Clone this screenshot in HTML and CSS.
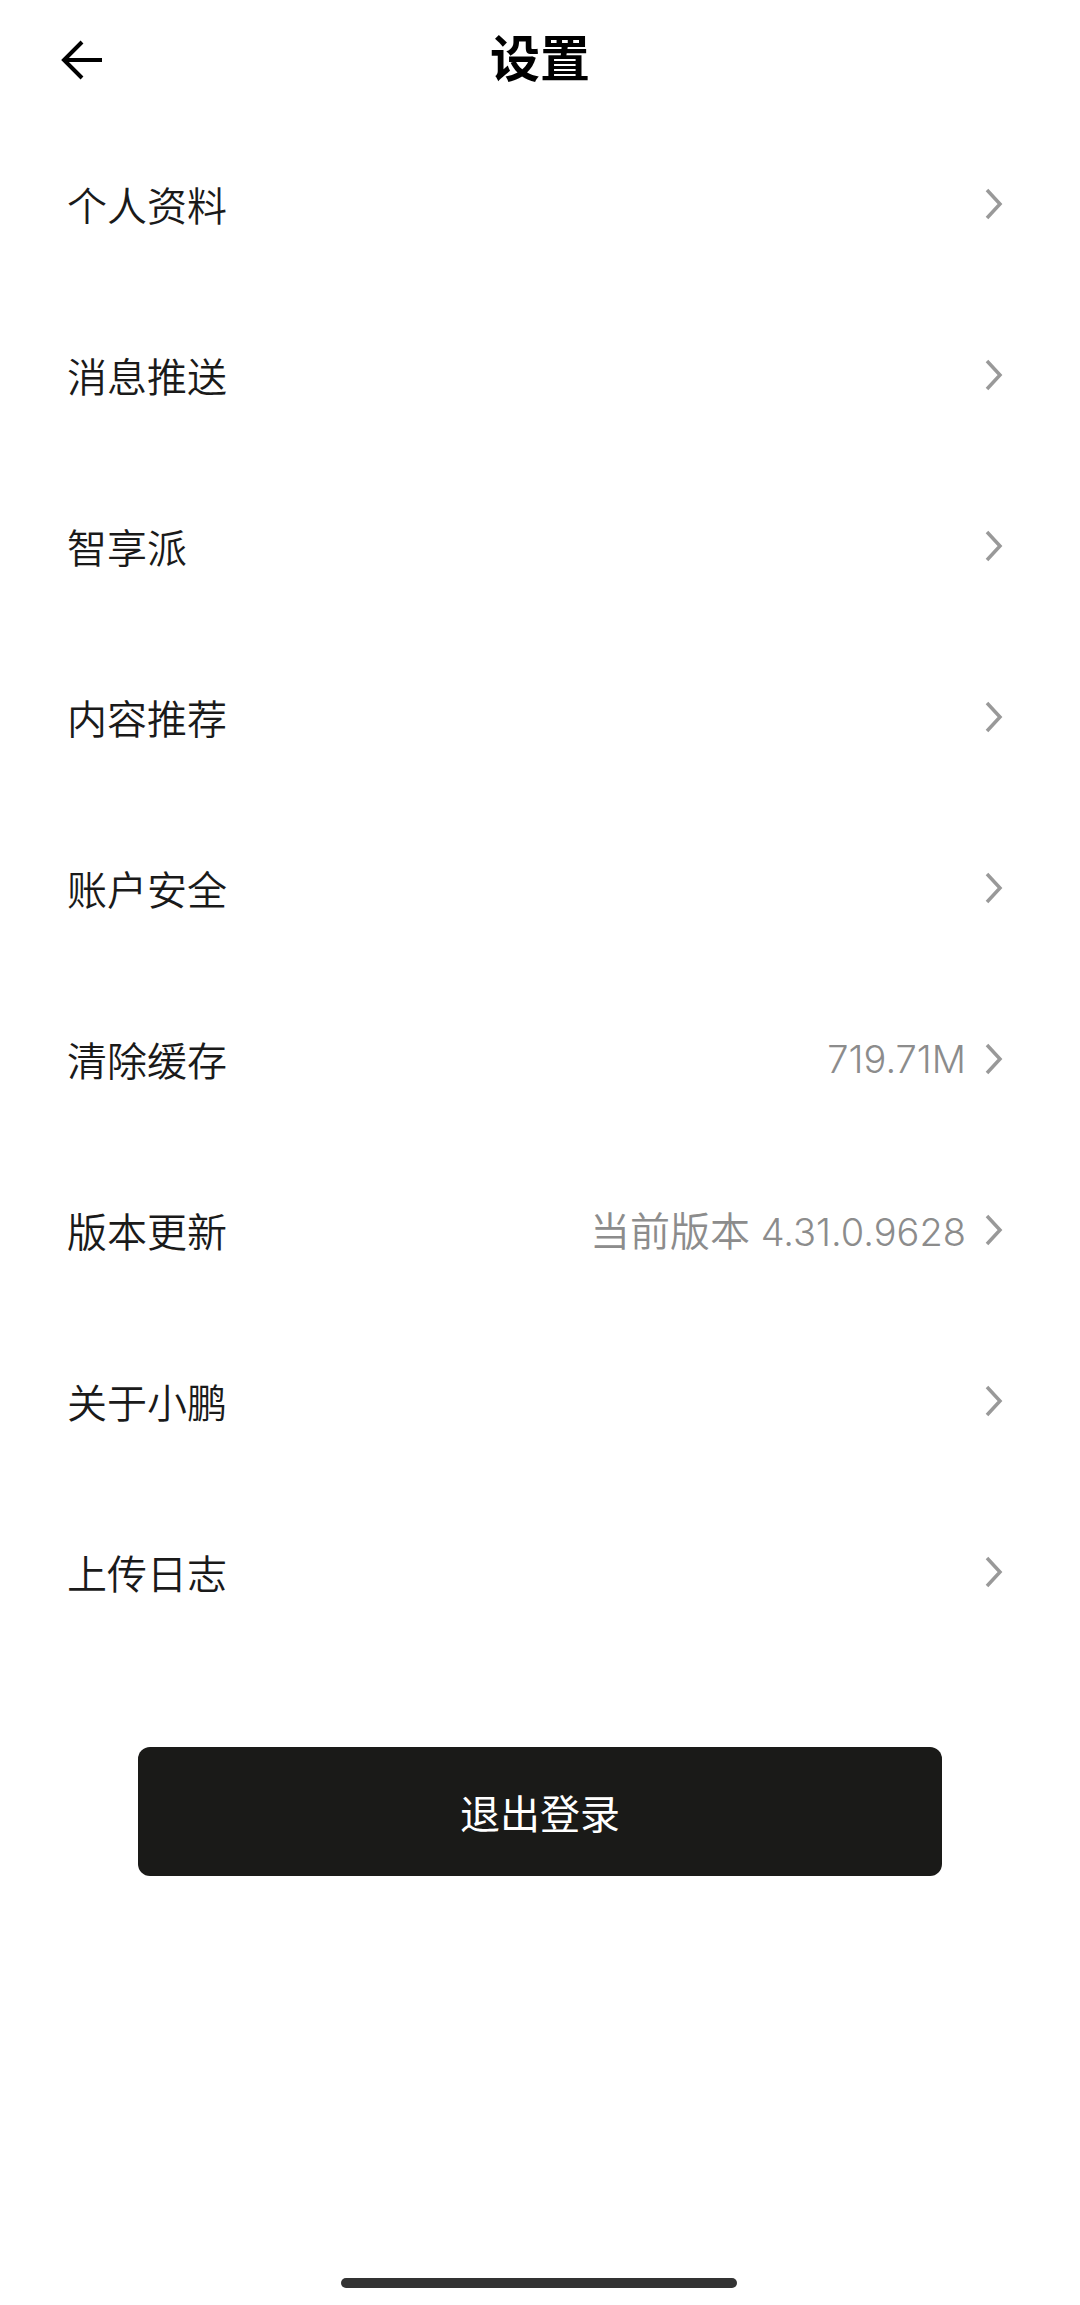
FILE: index.html
```html
<!DOCTYPE html>
<html lang="zh-CN">
<head>
    <meta charset="UTF-8">
    <meta name="viewport" content="width=device-width, initial-scale=1.0">
    <title>设置</title>
    <link rel="stylesheet" href="styles.css">
</head>
<body>
    <div class="page">
        <!-- 顶部标题栏 -->
        <header class="top-bar">
            <a href="#" class="back-button" aria-label="返回">
                <svg width="44" height="40" viewBox="0 0 44 40">
                    <path d="M41 20 H4 M21 2 L3 20 L21 38" fill="none" stroke="#000" stroke-width="4"/>
                </svg>
            </a>
            <h1 class="title">设置</h1>
            <span></span>
        </header>

        <ul class="menu">
            <li class="menu-row"><span class="label">个人资料</span><span class="chevron"></span></li>
            <li class="menu-row"><span class="label">消息推送</span><span class="chevron"></span></li>
            <li class="menu-row"><span class="label">智享派</span><span class="chevron"></span></li>
            <li class="menu-row"><span class="label">内容推荐</span><span class="chevron"></span></li>
            <li class="menu-row"><span class="label">账户安全</span><span class="chevron"></span></li>
            <li class="menu-row"><span class="label">清除缓存</span><span class="value">719.71M</span><span class="chevron"></span></li>
            <li class="menu-row"><span class="label">版本更新</span><span class="value"><span class="value-cjk">当前版本</span> 4.31.0.9628</span><span class="chevron"></span></li>
            <li class="menu-row"><span class="label">关于小鹏</span><span class="chevron"></span></li>
            <li class="menu-row"><span class="label">上传日志</span><span class="chevron"></span></li>
        </ul>

        <button class="logout-button">退出登录</button>

        <div class="home-indicator"></div>
    </div>
</body>
</html>
```

FILE: styles.css
```css
body, html {
    margin: 0;
    padding: 0;
    background: #fff;
    font-family: "Noto Sans CJK SC", "Noto Sans", sans-serif;
}

.page {
    position: relative;
    width: 1080px;
    height: 2305px;
    overflow: hidden;
}

.top-bar {
    display: grid;
    grid-template-columns: 1fr auto 1fr;
    align-items: center;
    height: 118px;
}

.back-button {
    display: flex;
    padding-left: 61px;
    padding-top: 1px;
}

.title {
    margin: 0 0 8px;
    font-size: 50px;
    font-weight: 700;
    color: #000;
    line-height: 1;
}

.menu {
    list-style: none;
    margin: 0;
    padding: 0;
}

.menu-row {
    display: flex;
    align-items: center;
    height: 171px;
    padding: 0 75px 0 67px;
}

.label {
    flex: 1;
    font-size: 40px;
    font-weight: 350;
    color: #1a1a1a;
    line-height: 1;
}

.value {
    font-family: Inter, "Noto Sans CJK SC", sans-serif;
    font-size: 38px;
    font-weight: 350;
    color: #8c8c8c;
    margin-right: 17px;
    line-height: 1;
}

.value-cjk {
    font-family: "Noto Sans CJK SC", sans-serif;
    font-size: 40px;
}

/* 右箭头 */
.chevron {
    width: 22px;
    height: 34px;
    background: no-repeat center;
    background-image: url("data:image/svg+xml,%3Csvg xmlns='http://www.w3.org/2000/svg' width='22' height='34' viewBox='0 0 22 34'%3E%3Cpath d='M4 3 L17 17 L4 31' fill='none' stroke='%23999' stroke-width='3.5'/%3E%3C/svg%3E");
}

.logout-button {
    display: block;
    width: 804px;
    height: 129px;
    margin: 90px auto 0;
    border: none;
    border-radius: 12px;
    background-color: #1a1a18;
    color: #fff;
    font-family: inherit;
    font-size: 40px;
    font-weight: 400;
    cursor: pointer;
}

.home-indicator {
    position: absolute;
    left: 341px;
    bottom: 17px;
    width: 396px;
    height: 10px;
    border-radius: 5px;
    background: #333;
}
```
